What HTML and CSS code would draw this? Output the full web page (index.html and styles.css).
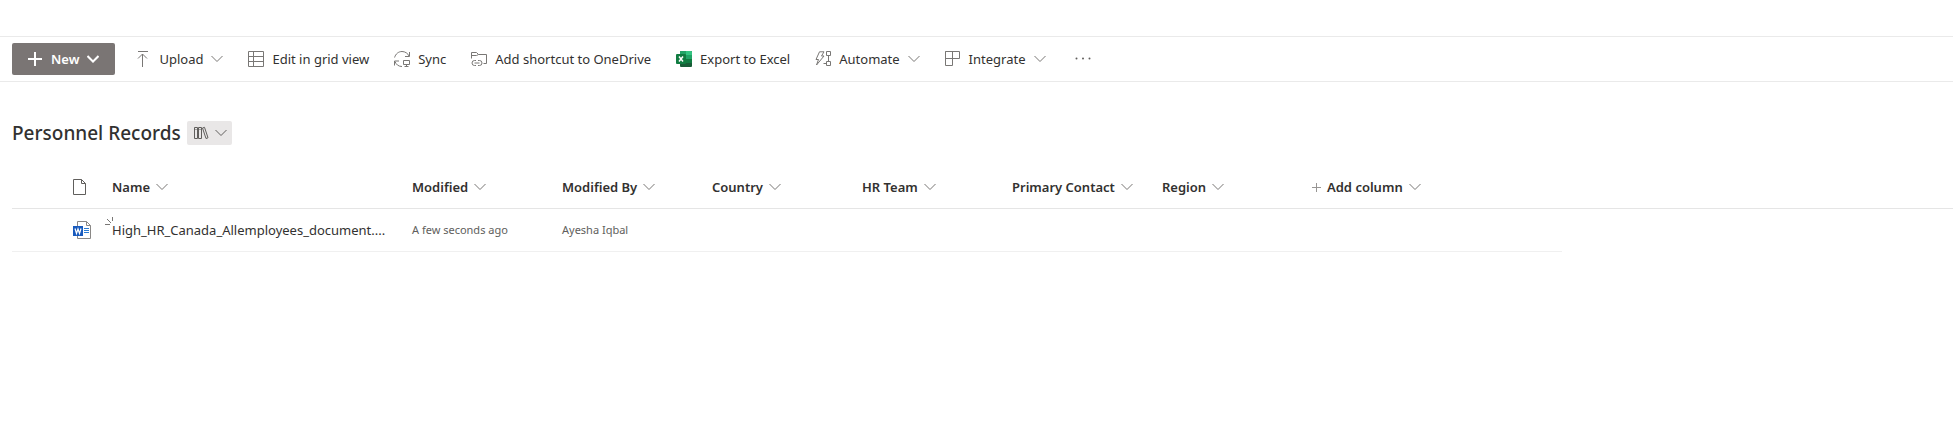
FILE: index.html
```html
<!DOCTYPE html>
<html lang="en">
<head>
<meta charset="utf-8">
<title>Personnel Records</title>
<link rel="stylesheet" href="styles.css">
</head>
<body>
<svg class="sprite" aria-hidden="true">
	<symbol id="chevron" viewBox="0 0 12 12"><path d="M.5 3 6 8.500 11.500 3"/></symbol>
</svg>

<div class="commandBar">
	<button class="newBtn" type="button">
		<svg class="icon" viewBox="0 0 16 16"><path d="M8 1v14M1 8h14"/></svg>
		<span>New</span>
		<svg class="chevron"><use href="#chevron"/></svg>
	</button>
	<button class="cmd" type="button">
		<svg class="icon" viewBox="0 0 16 16"><path d="M3 .5h10M7.500 3v13M3 7.500 7.500 3 12 7.500"/></svg>
		<span>Upload</span>
		<svg class="chevron"><use href="#chevron"/></svg>
	</button>
	<button class="cmd" type="button">
		<svg class="icon" viewBox="0 0 16 16"><path d="M.5.5h15v15H.5zM.5 5.500h15M.5 10.500h15M5.500.5v15"/></svg>
		<span>Edit in grid view</span>
	</button>
	<button class="cmd" type="button">
		<svg class="icon" viewBox="0 0 16 16"><path d="M.6 6.500C1.500 3 4.500.5 8 .5c3.200 0 6 2 7 4.500M15.500 1v4.500H11M.5 14.500V10H5M1 10.500c1 3 3.500 5 7 5M9.500 9.500h6v4h-6zM12.500 13.500v2M10.500 15.500h4"/></svg>
		<span>Sync</span>
	</button>
	<button class="cmd" type="button">
		<svg class="icon" viewBox="0 0 16 16"><path d="M.5 7.500v-6h5l2 2h8v9h-3M.5 4.500h5l2-1M5 9.500H3.500a2.500 2.500 0 0 0 0 5H5M7 9.500h1.500a2.500 2.500 0 0 1 0 5H7M3.500 12h5"/></svg>
		<span>Add shortcut to OneDrive</span>
	</button>
	<button class="cmd" type="button">
		<svg class="icon fileIcon" viewBox="0 0 16 16">
			<rect x="4" width="12" height="16" rx="1" fill="#185c37"/>
			<path d="M4 1a1 1 0 0 1 1-1h5v8H4z" fill="#21a366"/>
			<path d="M10 0h5a1 1 0 0 1 1 1v3h-6z" fill="#33c481"/>
			<path d="M10 4h6v4h-6z" fill="#21a366"/>
			<path d="M10 8h6v4h-6z" fill="#107c41"/>
			<rect y="3" width="10" height="10" rx="1" fill="#107c41"/>
			<path d="m3 5.500 4 5M7 5.500l-4 5" stroke="#fff" stroke-width="1.500"/>
		</svg>
		<span>Export to Excel</span>
	</button>
	<button class="cmd" type="button">
		<svg class="icon" viewBox="0 0 16 16"><path d="M4.500.8H9L6.500 5H9L1.500 14l2-5.500H1zM11.500.5h4v4h-4zM11.500 10.500h4v4h-4zM13.500 4.500v6M8.500 12.500h3"/></svg>
		<span>Automate</span>
		<svg class="chevron"><use href="#chevron"/></svg>
	</button>
	<button class="cmd" type="button">
		<svg class="icon" viewBox="0 0 16 16"><path d="M.5.5h14v7H.5zM7.500.5v14h-7V.5"/></svg>
		<span>Integrate</span>
		<svg class="chevron"><use href="#chevron"/></svg>
	</button>
	<button class="cmd moreBtn" type="button" aria-label="More">
		<svg class="icon dots" viewBox="0 0 16 16"><circle cx="1.500" cy="7.500" r="1"/><circle cx="8" cy="7.500" r="1"/><circle cx="14.500" cy="7.500" r="1"/></svg>
	</button>
</div>

<div class="titleRow">
	<h1>Personnel Records</h1>
	<button class="libraryBtn" type="button" aria-label="Switch library">
		<svg class="icon" viewBox="0 0 16 16"><path d="M1.500 2.500h3v11h-3zM5.500 2.500h3v11h-3zM9.500 3l2-.7 3.500 10.500-2 .7zM2.500 4.500h1M6.500 4.500h1"/></svg>
		<svg class="chevron"><use href="#chevron"/></svg>
	</button>
</div>

<table class="docList">
	<colgroup>
		<col class="colCheck">
		<col class="colType">
		<col class="colName">
		<col class="colField" span="6">
		<col class="colAdd">
		<col>
	</colgroup>
	<thead>
		<tr>
			<th></th>
			<th><svg class="pageIcon" viewBox="0 0 16 16"><path d="M1.500.5h8l4 4v11h-12zM9.500.5v4h4"/></svg></th>
			<th><button type="button">Name <svg class="chevron"><use href="#chevron"/></svg></button></th>
			<th><button type="button">Modified <svg class="chevron"><use href="#chevron"/></svg></button></th>
			<th><button type="button">Modified By <svg class="chevron"><use href="#chevron"/></svg></button></th>
			<th><button type="button">Country <svg class="chevron"><use href="#chevron"/></svg></button></th>
			<th><button type="button">HR Team <svg class="chevron"><use href="#chevron"/></svg></button></th>
			<th><button type="button">Primary Contact <svg class="chevron"><use href="#chevron"/></svg></button></th>
			<th><button type="button">Region <svg class="chevron"><use href="#chevron"/></svg></button></th>
			<th><button type="button"><svg class="plus" viewBox="0 0 9 9"><path d="M4.500 0v9M0 4.500h9"/></svg>Add column <svg class="chevron"><use href="#chevron"/></svg></button></th>
			<th></th>
		</tr>
	</thead>
	<tbody>
		<tr>
			<td></td>
			<td>
				<svg class="wordIcon" viewBox="0 0 18 18">
					<path d="M4.500.5h9l4 4v13h-13z" fill="#fff" stroke="#8a8886"/>
					<path d="M13.500.5v4h4" fill="none" stroke="#8a8886"/>
					<path d="M11 7.500h5M11 9.500h5M11 11.500h5" stroke="#2b7cd3"/>
					<rect y="5" width="10" height="10" fill="#185abd" stroke="none"/>
					<path d="m2 7.500 1.500 5L5 8l1.500 4.500 1.500-5" fill="none" stroke="#fff" stroke-width="1.200"/>
				</svg>
			</td>
			<td class="nameCell">
				<svg class="newMark" viewBox="0 0 9 9"><path d="M7.500 0v4M2 2l4 4M0 7.500h5"/></svg>
				<a href="#">High_HR_Canada_Allemployees_document....</a>
			</td>
			<td class="fieldCell">A few seconds ago</td>
			<td class="fieldCell">Ayesha Iqbal</td>
			<td></td>
			<td></td>
			<td></td>
			<td></td>
			<td></td>
			<td class="filler"></td>
		</tr>
	</tbody>
</table>
</body>
</html>
```
FILE: styles.css
```css
body {
	margin: 0;
	padding-top: 36px;
	background: #fff;
	color: #323130;
	font-family: "Noto Sans", "Open Sans", sans-serif;
	font-size: 13px;
}
button {
	border: 0;
	padding: 0;
	background: none;
	color: inherit;
	font: inherit;
	white-space: nowrap;
	cursor: pointer;
}
svg {
	flex: none;
	fill: none;
	stroke: #797775;
}
.sprite {
	display: none;
}
.icon {
	width: 16px;
	height: 16px;
}
.chevron {
	width: 12px;
	height: 12px;
}
.commandBar {
	display: flex;
	align-items: center;
	gap: 25px;
	height: 44px;
	padding: 0 12px;
	border-top: 1px solid #eaeaea;
	border-bottom: 1px solid #eaeaea;
}
.cmd {
	display: flex;
	align-items: center;
	gap: 8px;
	height: 32px;
}
.newBtn {
	display: flex;
	align-items: center;
	gap: 8px;
	height: 32px;
	padding: 0 16px 0 15px;
	margin-right: -5px;
	border-radius: 2px;
	background: #7a7574;
	color: #fff;
	font-weight: 600;
}
.newBtn svg {
	stroke: #fff;
	stroke-width: 2;
}
.moreBtn {
	margin-left: 4px;
}
.dots {
	fill: #605e5c;
	stroke: none;
}
.fileIcon {
	stroke: none;
}
.titleRow {
	display: flex;
	align-items: center;
	gap: 6px;
	padding: 39px 12px 0;
}
h1 {
	margin: 0;
	font-size: 19px;
	font-weight: 500;
	line-height: 24px;
}
.libraryBtn {
	display: flex;
	align-items: center;
	gap: 6px;
	height: 24px;
	padding: 0 5px 0 6px;
	border-radius: 2px;
	background: #e9e7e7;
}
.libraryBtn svg {
	stroke: #605e5c;
}
.docList {
	width: calc(100% - 12px);
	margin: 21px 0 0 12px;
	border-collapse: collapse;
	table-layout: fixed;
}
.colCheck {
	width: 48px;
}
.colType {
	width: 40px;
}
.colName {
	width: 300px;
}
.colField {
	width: 150px;
}
.colAdd {
	width: 262px;
}
.docList th,
.docList td {
	height: 42px;
	padding: 0 0 0 12px;
	text-align: left;
	white-space: nowrap;
}
.docList th {
	border-bottom: 1px solid #e5e5e5;
	font-weight: 600;
}
.docList td {
	border-bottom: 1px solid #f0f0f0;
	color: #605e5c;
}
.docList .filler {
	border-bottom: 0;
}
.docList .fieldCell {
	height: 40px;
	padding-bottom: 2px;
	font-size: 11px;
}
.docList th button {
	display: flex;
	align-items: center;
	gap: 6px;
}
.pageIcon {
	display: block;
	width: 16px;
	height: 16px;
	stroke: #605e5c;
}
.wordIcon {
	display: block;
	width: 18px;
	height: 18px;
	margin-left: 1px;
}
.docList .plus {
	width: 9px;
	height: 9px;
	stroke: #979593;
}
.docList .nameCell {
	position: relative;
}
.nameCell a {
	color: #323130;
	text-decoration: none;
}
/* small glimmer beside a newly added file */
.newMark {
	position: absolute;
	top: 8px;
	left: 5px;
	width: 9px;
	height: 9px;
}
```
